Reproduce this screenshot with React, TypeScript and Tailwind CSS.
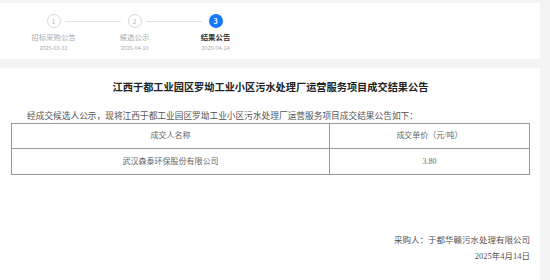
import { FC } from "react";

type StepType = {
  label: string;
  date: string;
};

const steps: StepType[] = [
  { label: "招标采购公告", date: "2025-03-31" },
  { label: "候选公示", date: "2025-04-10" },
  { label: "结果公告", date: "2025-04-14" },
];

const sans = { fontFamily: '"Noto Sans CJK SC", "Noto Sans", sans-serif' };

const App: FC = () => {
  return (
    <div
      className="min-h-[280px] w-full bg-[#f4f4f4] pt-[3px] pr-[10px]"
      style={sans}
    >
      {/* steps */}
      <div className="h-[56px] bg-white flex pl-[13px] pt-[11px]">
        {steps.map((step, i) => {
          const active = i === steps.length - 1;
          return (
            <div key={step.label} className="relative w-[81px] flex flex-col items-center">
              <div
                className={
                  active
                    ? "w-[14px] h-[14px] rounded-full bg-[#1677ff] text-white text-[7px] font-bold flex items-center justify-center"
                    : "w-[14px] h-[14px] rounded-full border border-[#d9d9d9] text-[#bbb] text-[7px] flex items-center justify-center"
                }
              >
                {i + 1}
              </div>
              {!active && (
                <div className="absolute top-[7px] left-[52px] w-[56px] h-px bg-[#e3e3e3]" />
              )}
              <div
                className={
                  active
                    ? "mt-[3px] text-[7.4px] leading-[12px] font-bold text-[#333]"
                    : "mt-[3px] text-[7.4px] leading-[12px] text-[#aaa]"
                }
              >
                {step.label}
              </div>
              <div className="text-[5.5px] leading-[10px] text-[#aaa]">{step.date}</div>
            </div>
          );
        })}
      </div>

      {/* content */}
      <div className="mt-[9px] bg-white min-h-[212px] pl-[11px] pr-[10px] pt-[12px]">
        <h1 className="text-center text-[10.2px] leading-[14px] font-bold text-[#222]">
          江西于都工业园区罗坳工业小区污水处理厂运营服务项目成交结果公告
        </h1>
        <div style={{ fontFamily: '"Liberation Serif", "Noto Sans CJK SC", serif' }} className="text-[#555]">
          <p className="mt-[16px] text-[8.7px] leading-[12px] indent-[16px]">
            经成交候选人公示，现将江西于都工业园区罗坳工业小区污水处理厂运营服务项目成交结果公告如下：
          </p>
          <table className="mt-[1px] w-full border-collapse text-[8px] text-[#666]">
            <tbody>
              <tr className="h-[25px]">
                <td className="border border-[#999] text-center w-[318px]">成交人名称</td>
                <td className="border border-[#999] text-center">成交单价（元/吨）</td>
              </tr>
              <tr className="h-[26px]">
                <td className="border border-[#999] text-center">武汉森泰环保股份有限公司</td>
                <td className="border border-[#999] text-center">3.80</td>
              </tr>
            </tbody>
          </table>
          <div className="mt-[57px] flex flex-col items-end text-[8.5px] leading-[16px] text-[#555]">
            <p>采购人：于都华赣污水处理有限公司</p>
            <p>2025年4月14日</p>
          </div>
        </div>
      </div>
    </div>
  );
};

export default App;
